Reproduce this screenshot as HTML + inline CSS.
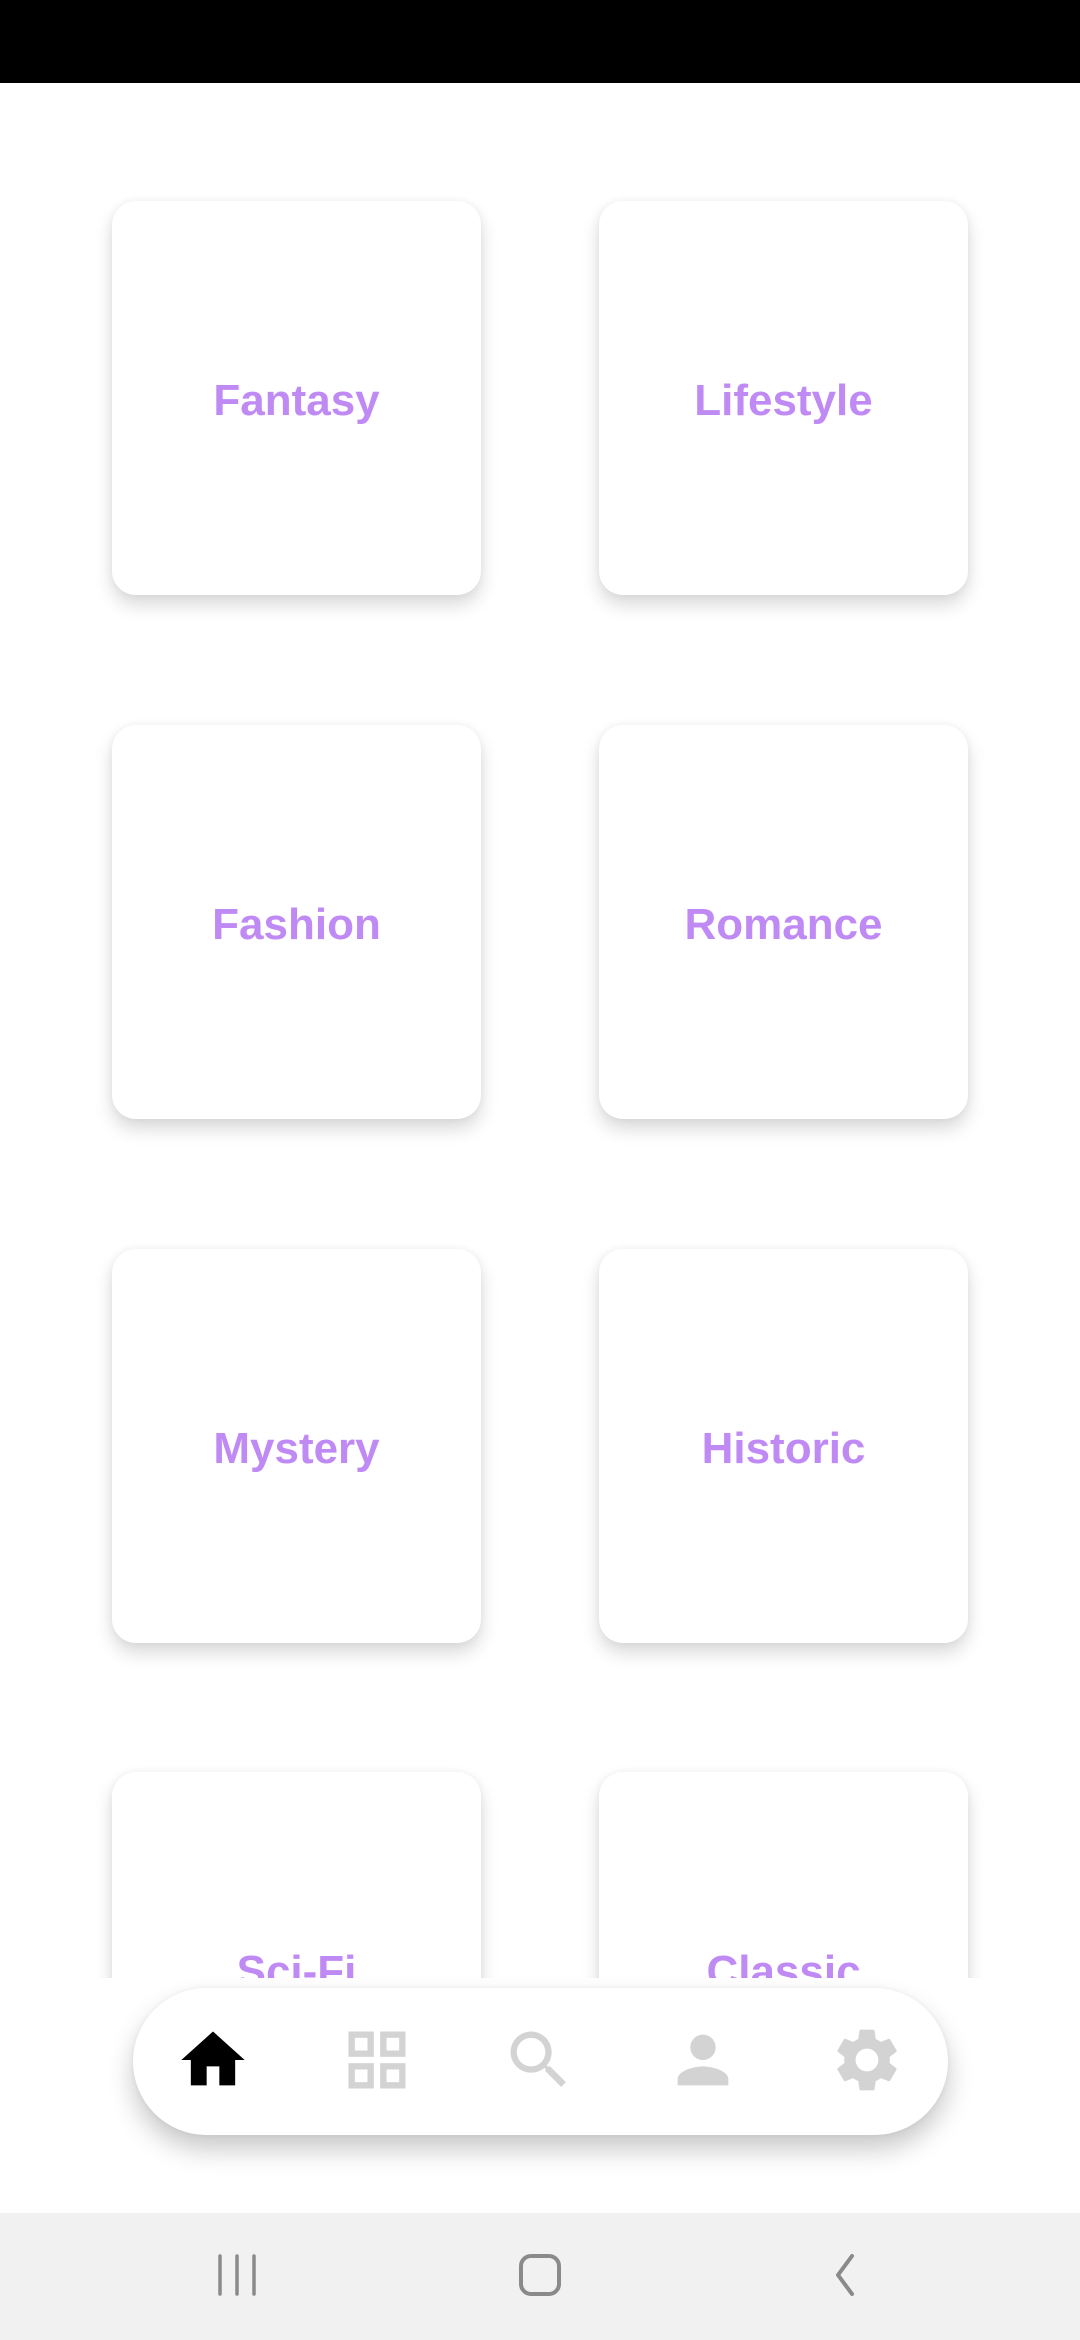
<!DOCTYPE html>
<html><head><meta charset="utf-8"><style>
*{margin:0;padding:0;box-sizing:border-box}
body{width:1080px;height:2340px;background:#fff;position:relative;overflow:hidden;font-family:"Liberation Sans",sans-serif}
.sb{position:absolute;left:0;top:0;width:1080px;height:83px;background:#000}
.clip{position:absolute;left:0;top:83px;width:1080px;height:1895px;overflow:hidden}
.card{position:absolute;width:369px;height:394px;background:#fff;border-radius:24px;box-shadow:0 10px 18px rgba(0,0,0,.15),0 0 8px rgba(0,0,0,.05);display:flex;align-items:center;justify-content:center;color:#c08af5;font-weight:bold;font-size:44px;padding-top:6px}
.pill{position:absolute;left:133px;top:1988px;width:815px;height:147px;background:#fff;border-radius:74px;box-shadow:0 14px 26px rgba(0,0,0,.22),0 0 6px rgba(0,0,0,.05)}
.ic{position:absolute;width:76px;height:76px;top:2022px}
.nav{position:absolute;left:0;top:2213px;width:1080px;height:127px;background:#f1f1f1}
</style></head><body>
<div class="sb"></div>
<div class="clip">
<div class="card" style="left:112px;top:118px">Fantasy</div>
<div class="card" style="left:599px;top:118px">Lifestyle</div>
<div class="card" style="left:112px;top:642px">Fashion</div>
<div class="card" style="left:599px;top:642px">Romance</div>
<div class="card" style="left:112px;top:1166px">Mystery</div>
<div class="card" style="left:599px;top:1166px">Historic</div>
<div class="card" style="left:112px;top:1689px">Sci-Fi</div>
<div class="card" style="left:599px;top:1689px">Classic</div>
</div>
<div class="pill"></div>
<svg class="ic" style="left:175px" viewBox="0 0 24 24"><path d="M10 20v-6h4v6h5v-8h3L12 3 2 12h3v8z" fill="#000"/></svg>
<svg class="ic" style="left:339px" viewBox="0 0 24 24" fill="none" stroke="#d3d3d3" stroke-width="2"><rect x="4" y="4" width="6" height="6"/><rect x="14" y="4" width="6" height="6"/><rect x="4" y="14" width="6" height="6"/><rect x="14" y="14" width="6" height="6"/></svg>
<svg class="ic" style="left:501px" viewBox="0 0 24 24"><path d="M15.5 14h-.79l-.28-.27A6.47 6.47 0 0 0 16 9.5 6.5 6.5 0 1 0 9.5 16c1.61 0 3.09-.59 4.23-1.57l.27.28v.79l5 4.99L20.49 19l-4.99-5zm-6 0C7.01 14 5 11.990 5 9.5S7.01 5 9.5 5 14 7.01 14 9.5 11.99 14 9.5 14z" fill="#d3d3d3"/></svg>
<svg class="ic" style="left:665px" viewBox="0 0 24 24"><path d="M12 12c2.21 0 4-1.79 4-4s-1.79-4-4-4-4 1.79-4 4 1.79 4 4 4zm0 2c-2.67 0-8 1.34-8 4v2h16v-2c0-2.66-5.330-4-8-4z" fill="#d3d3d3"/></svg>
<svg class="ic" style="left:829px" viewBox="0 0 24 24"><path d="M19.14 12.94c.04-.3.06-.61.06-.94 0-.32-.02-.64-.07-.94l2.03-1.58a.49.49 0 0 0 .12-.61l-1.920-3.32a.488.488 0 0 0-.59-.22l-2.39.96c-.5-.38-1.03-.7-1.62-.94l-.36-2.54a.484.484 0 0 0-.48-.41h-3.84c-.24 0-.43.17-.47.41l-.36 2.54c-.59.24-1.13.57-1.62.94l-2.39-.96c-.22-.08-.47 0-.59.22L2.74 8.87c-.12.21-.08.47.12.61l2.03 1.58c-.05.3-.09.63-.09.94s.02.64.07.94l-2.03 1.58a.49.49 0 0 0-.12.61l1.92 3.32c.12.22.37.29.59.22l2.39-.96c.5.38 1.03.7 1.62.94l.36 2.54c.05.24.24.41.48.41h3.84c.24 0 .44-.17.47-.41l.36-2.54c.59-.24 1.13-.56 1.62-.94l2.39.96c.22.08.47 0 .59-.22l1.92-3.32c.12-.22.07-.47-.12-.61l-2.010-1.58zM12 15.6c-1.98 0-3.6-1.62-3.6-3.6s1.62-3.6 3.6-3.6 3.6 1.62 3.6 3.6-1.620 3.6-3.6 3.6z" fill="#d3d3d3"/></svg>
<div class="nav"></div>
<svg style="position:absolute;left:210px;top:2250px" width="56" height="50" viewBox="0 0 56 50" stroke="#8a8a8a" stroke-width="3.5" stroke-linecap="round"><path d="M10 6v38M27 6v38M44 6v38"/></svg>
<svg style="position:absolute;left:515px;top:2250px" width="50" height="50" viewBox="0 0 50 50"><rect x="6" y="6" width="38" height="38" rx="10" fill="none" stroke="#8a8a8a" stroke-width="4"/></svg>
<svg style="position:absolute;left:820px;top:2250px" width="50" height="50" viewBox="0 0 50 50"><path d="M32 6L18 25l14 19" fill="none" stroke="#8a8a8a" stroke-width="4" stroke-linecap="round" stroke-linejoin="round"/></svg>
</body></html>
